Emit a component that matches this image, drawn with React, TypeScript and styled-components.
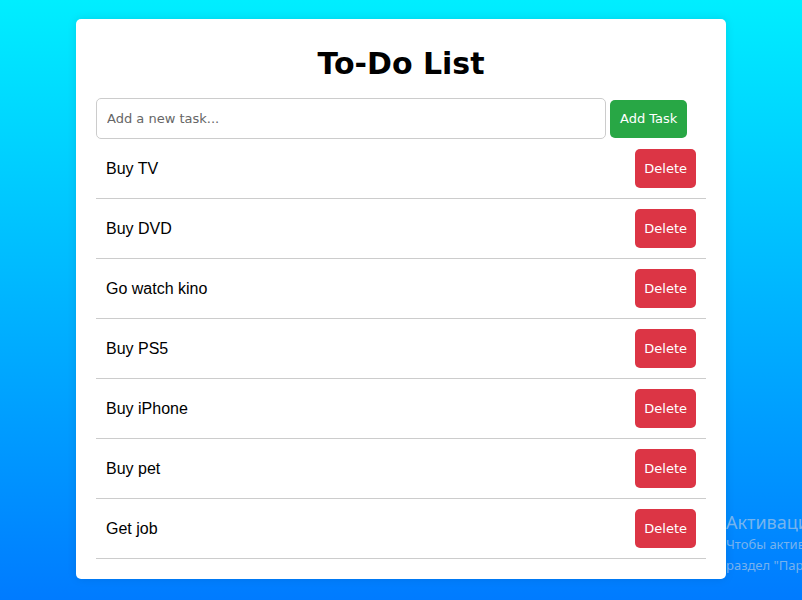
import styled, { createGlobalStyle } from "styled-components";

const tasks = [
    "Buy TV",
    "Buy DVD",
    "Go watch kino",
    "Buy PS5",
    "Buy iPhone",
    "Buy pet",
    "Get job",
];

const GlobalStyle = createGlobalStyle`
    html, body {
        margin: 0;
        padding: 0;
    }
    body {
        min-height: 100vh;
        overflow: hidden;
        background: linear-gradient(to bottom, #00eeff, #007bff);
        font-family: "Liberation Sans", Arial, sans-serif;
    }
`;

const App = () => {
    return (
        <>
            <GlobalStyle />
            <Page>
                <Card>
                    <Title>To-Do List</Title>
                    <InputRow>
                        <TaskInput type="text" placeholder="Add a new task..." />
                        <AddButton>Add Task</AddButton>
                    </InputRow>
                    <TaskList>
                        {tasks.map((task) => (
                            <TaskItem key={task}>
                                <TaskText>{task}</TaskText>
                                <DeleteButton>Delete</DeleteButton>
                            </TaskItem>
                        ))}
                    </TaskList>
                </Card>
            </Page>
            <Watermark>
                <WatermarkTitle>Активация Windows</WatermarkTitle>
                <WatermarkLine>Чтобы активировать Windows, перейдите в</WatermarkLine>
                <WatermarkLine>раздел "Параметры".</WatermarkLine>
            </Watermark>
        </>
    );
};

const comic = `"Comic Sans MS", "DejaVu Sans", sans-serif`;

const Page = styled.div`
    display: flex;
    justify-content: center;
    padding-top: 19px;
`;

const Card = styled.div`
    width: 610px;
    padding: 20px;
    background: #ffffff;
    border-radius: 5px;
    box-shadow: 0 0 10px rgba(0, 0, 0, 0.1);
`;

const Title = styled.h1`
    margin: 0 0 10px;
    height: 49px;
    line-height: 50px;
    text-align: center;
    font-family: ${comic};
    font-size: 30px;
    font-weight: bold;
    color: #000;
`;

const InputRow = styled.div`
    display: flex;
    align-items: center;
    gap: 4px;
`;

const TaskInput = styled.input`
    width: 488px;
    height: 19px;
    padding: 10px;
    border: 1px solid #ccc;
    border-radius: 5px;
    font-family: ${comic};
    font-size: 13px;
    color: #333;
    outline: none;
    &::placeholder {
        color: #666;
    }
`;

const AddButton = styled.button`
    height: 38px;
    padding: 0 10px;
    border: none;
    border-radius: 5px;
    background: #28a745;
    color: #fff;
    font-family: ${comic};
    font-size: 13px;
    cursor: pointer;
`;

const TaskList = styled.ul`
    list-style: none;
    margin: 0;
    padding: 0;
`;

const TaskItem = styled.li`
    display: flex;
    align-items: center;
    justify-content: space-between;
    height: 39px;
    padding: 10px;
    border-bottom: 1px solid #ccc;
`;

const TaskText = styled.span`
    font-size: 16px;
    color: #000;
`;

const DeleteButton = styled.button`
    height: 39px;
    padding: 0 9px;
    border: none;
    border-radius: 5px;
    background: #dc3545;
    color: #fff;
    font-family: ${comic};
    font-size: 13px;
    cursor: pointer;
`;

const Watermark = styled.div`
    position: absolute;
    left: 726px;
    top: 510px;
    width: 76px;
    overflow: hidden;
    white-space: nowrap;
    font-family: "Noto Sans", "DejaVu Sans", sans-serif;
    color: rgba(200, 210, 225, 0.6);
    pointer-events: none;
`;

const WatermarkTitle = styled.div`
    font-size: 18px;
    line-height: 24px;
`;

const WatermarkLine = styled.div`
    font-size: 13px;
    line-height: 21px;
`;

export default App;
